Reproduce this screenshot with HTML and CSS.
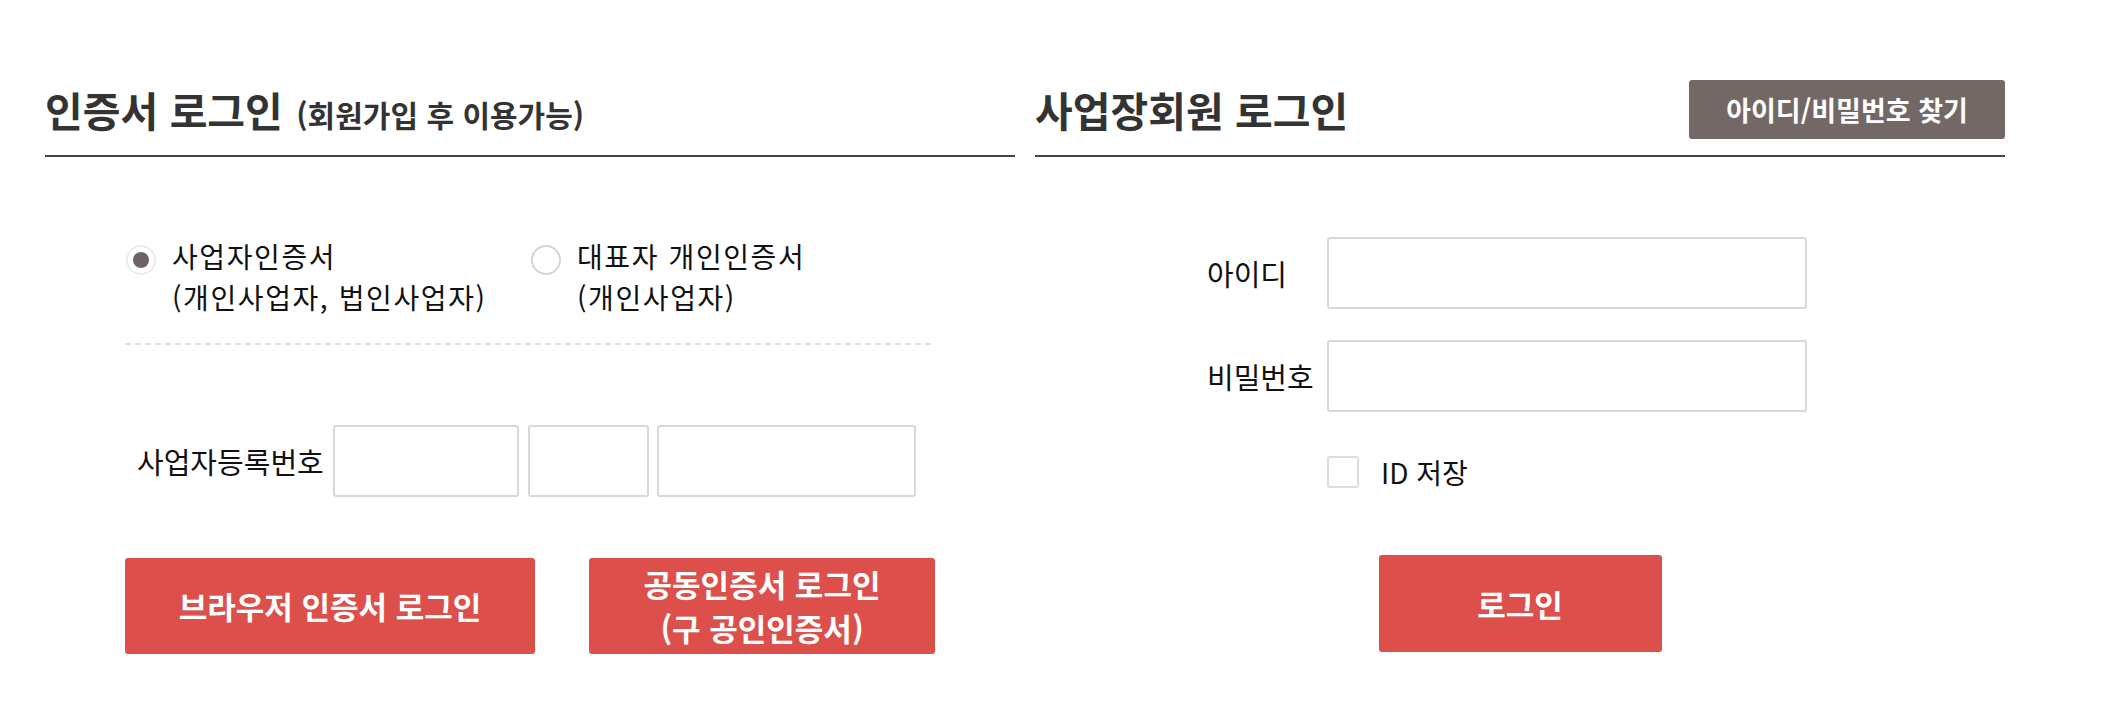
FILE: index.html
```html
<!DOCTYPE html>
<html lang="ko">
<head>
    <meta charset="UTF-8">
    <meta name="viewport" content="width=device-width, initial-scale=1.0">
    <title>로그인</title>
    <link rel="stylesheet" href="styles.css">
</head>
<body>

    <div class="login-wrap">

        <!-- 인증서 로그인 -->
        <section class="login-box">
            <div class="box-head">
                <h2>인증서 로그인 <small>(회원가입 후 이용가능)</small></h2>
            </div>

            <div class="cert-body">
                <div class="cert-types">
                    <label class="radio-item">
                        <input type="radio" name="certType" checked>
                        <span class="radio-mark"></span>
                        <span class="radio-text">사업자인증서<br>(개인사업자, 법인사업자)</span>
                    </label>
                    <label class="radio-item">
                        <input type="radio" name="certType">
                        <span class="radio-mark"></span>
                        <span class="radio-text">대표자 개인인증서<br>(개인사업자)</span>
                    </label>
                </div>

                <div class="dash-line"></div>

                <div class="biz-row">
                    <span class="biz-label">사업자등록번호</span>
                    <input type="text" class="field biz-1">
                    <input type="text" class="field biz-2">
                    <input type="text" class="field biz-3">
                </div>

                <div class="cert-buttons">
                    <button class="btn-red btn-browser">브라우저 인증서 로그인</button>
                    <button class="btn-red btn-joint">공동인증서 로그인<br>(구 공인인증서)</button>
                </div>
            </div>
        </section>

        <!-- 사업장회원 로그인 -->
        <section class="login-box">
            <div class="box-head">
                <h2>사업장회원 로그인</h2>
                <button class="btn-find">아이디/비밀번호 찾기</button>
            </div>

            <div class="member-body">
                <div class="form-row">
                    <span class="form-label">아이디</span>
                    <input type="text" class="field member-field">
                </div>
                <div class="form-row">
                    <span class="form-label">비밀번호</span>
                    <input type="password" class="field member-field">
                </div>
                <label class="save-id">
                    <input type="checkbox">
                    <span class="check-mark"></span>
                    <span>ID 저장</span>
                </label>
                <div class="member-buttons">
                    <button class="btn-red btn-login">로그인</button>
                </div>
            </div>
        </section>

    </div>

</body>
</html>
```

FILE: styles.css
```css
body {
    margin: 0;
    background: #fff;
    font-family: "Noto Sans CJK KR", "Noto Sans", sans-serif;
    color: #111;
}

.login-wrap {
    display: grid;
    grid-template-columns: 1fr 1fr;
    gap: 20px;
    width: 1960px;
    margin: 0 0 0 45px;
    padding-top: 80px;
}

/* Box header */
.box-head {
    display: flex;
    align-items: center;
    justify-content: space-between;
    min-height: 59px;
    padding-bottom: 16px;
    border-bottom: 2px solid #444;
}

.box-head h2 {
    margin: 0;
    font-size: 41px;
    font-weight: bold;
    color: #333;
    line-height: 1;
    white-space: nowrap;
}

.box-head h2 small {
    margin-left: 2px;
    font-size: 30px;
}

.btn-find {
    width: 316px;
    height: 59px;
    border: none;
    border-radius: 3px;
    background: #736866;
    color: #fff;
    font-family: inherit;
    font-size: 27px;
    font-weight: bold;
    cursor: pointer;
}

/* Common fields */
.field {
    box-sizing: border-box;
    height: 72px;
    margin: 0;
    border: 2px solid #d8d8d8;
    border-radius: 3px;
    background: #fff;
    font-size: 24px;
}

.btn-red {
    border: none;
    border-radius: 3px;
    background: #dd4f4a;
    color: #fff;
    font-family: inherit;
    font-size: 31px;
    font-weight: bold;
    line-height: 44px;
    cursor: pointer;
}

/* 인증서 로그인 */
.cert-body {
    padding: 79px 80px 0;
}

.cert-types {
    display: grid;
    grid-template-columns: 1fr 1fr;
}

.radio-item {
    display: flex;
    align-items: flex-start;
    font-size: 28px;
    line-height: 40.5px;
    letter-spacing: 1.6px;
    white-space: nowrap;
    cursor: pointer;
}

.radio-item input {
    display: none;
}

.radio-mark {
    box-sizing: border-box;
    flex: none;
    width: 30px;
    height: 30px;
    margin: 9px 16px 0 1px;
    border: 2px solid #d4d4d4;
    border-radius: 50%;
    position: relative;
}

.radio-item input:checked + .radio-mark {
    border-color: #ececec;
}

.radio-item input:checked + .radio-mark::after {
    content: "";
    position: absolute;
    top: 5px;
    left: 5px;
    width: 16px;
    height: 16px;
    border-radius: 50%;
    background: #6d6363;
}

.dash-line {
    height: 2px;
    margin-top: 26px;
    background: repeating-linear-gradient(to right, #e0e0e0 0 6px, transparent 6px 10px);
}

.biz-row {
    display: flex;
    align-items: center;
    margin-top: 80px;
    padding-left: 12px;
}

.biz-label {
    width: 196px;
    font-size: 29px;
    white-space: nowrap;
}

.biz-1 { width: 186px; }
.biz-2 { width: 121px; margin-left: 9px; }
.biz-3 { width: 259px; margin-left: 8px; }

.cert-buttons {
    display: flex;
    justify-content: space-between;
    margin-top: 61px;
}

.btn-browser {
    width: 410px;
    height: 96px;
}

.btn-joint {
    width: 346px;
    height: 96px;
}

/* 사업장회원 로그인 */
.member-body {
    padding: 80px 0 0 172px;
}

.form-row {
    display: flex;
    align-items: center;
    margin-bottom: 31px;
}

.form-label {
    width: 120px;
    font-size: 29px;
    white-space: nowrap;
}

.member-field {
    width: 480px;
}

.save-id {
    display: flex;
    align-items: center;
    margin: 40px 0 0 120px;
    font-size: 28px;
    cursor: pointer;
}

.save-id input {
    display: none;
}

.check-mark {
    box-sizing: border-box;
    width: 32px;
    height: 32px;
    margin-right: 22px;
    border: 2px solid #dcdcdc;
    border-radius: 3px;
}

.member-buttons {
    display: flex;
    justify-content: center;
    margin: 63px 0 0 -172px;
}

.btn-login {
    width: 283px;
    height: 97px;
}
```
